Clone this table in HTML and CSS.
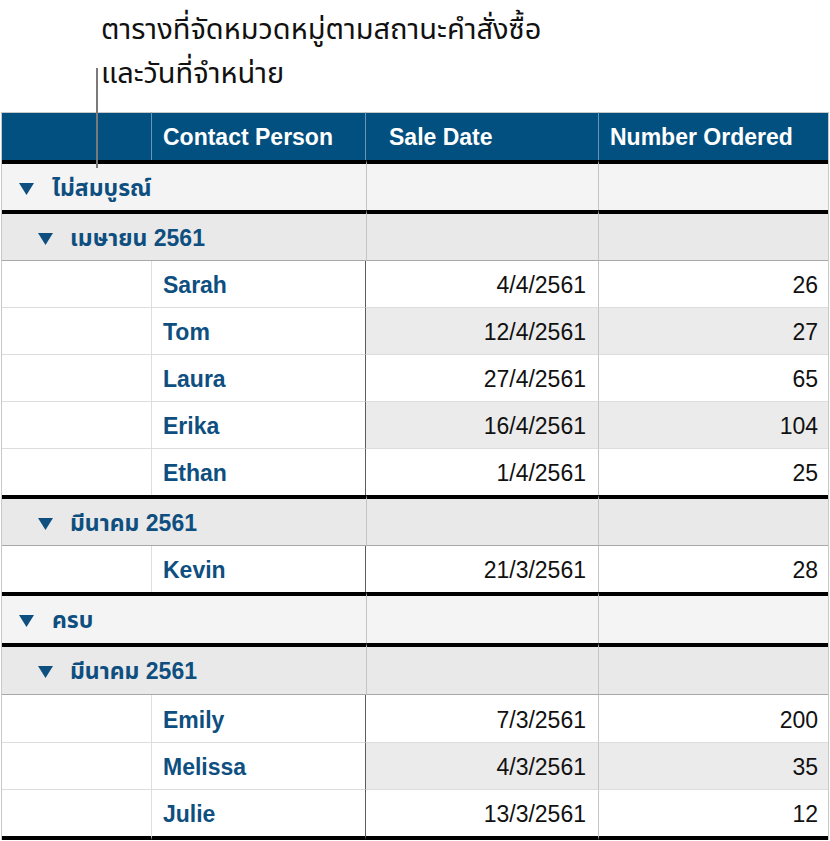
FILE: index.html
```html
<!DOCTYPE html>
<html lang="th">
<head>
<meta charset="utf-8">
<title>Table</title>
<link rel="stylesheet" href="styles.css">
</head>
<body>
<div class="page">
  <div class="caption">
    <p class="caption-text">ตารางที่จัดหมวดหมู่ตามสถานะคำสั่งซื้อ<br>และวันที่จำหน่าย</p>
    <span class="callout-line"></span>
  </div>
  <table class="grid">
    <colgroup>
      <col class="c1"><col class="c2"><col class="c3"><col class="c4">
    </colgroup>
    <thead>
      <tr class="head">
        <th></th>
        <th class="h-name">Contact Person</th>
        <th class="h-date">Sale Date</th>
        <th class="h-num">Number Ordered</th>
      </tr>
    </thead>
    <tbody>
      <tr class="g1">
        <td colspan="2" class="glabel"><span class="tri"><svg width="15" height="12" viewBox="0 0 15 12"><path d="M0 0H15L7.5 12Z"/></svg></span>ไม่สมบูรณ์</td>
        <td class="gsep"></td><td></td>
      </tr>
      <tr class="g2">
        <td colspan="2" class="glabel"><span class="tri"><svg width="15" height="12" viewBox="0 0 15 12"><path d="M0 0H15L7.5 12Z"/></svg></span>เมษายน 2561</td>
        <td class="gsep"></td><td></td>
      </tr>
      <tr class="row"><td></td><td class="name">Sarah</td><td class="date">4/4/2561</td><td class="num">26</td></tr>
      <tr class="row alt"><td></td><td class="name">Tom</td><td class="date">12/4/2561</td><td class="num">27</td></tr>
      <tr class="row"><td></td><td class="name">Laura</td><td class="date">27/4/2561</td><td class="num">65</td></tr>
      <tr class="row alt"><td></td><td class="name">Erika</td><td class="date">16/4/2561</td><td class="num">104</td></tr>
      <tr class="row last"><td></td><td class="name">Ethan</td><td class="date">1/4/2561</td><td class="num">25</td></tr>
      <tr class="g2">
        <td colspan="2" class="glabel"><span class="tri"><svg width="15" height="12" viewBox="0 0 15 12"><path d="M0 0H15L7.5 12Z"/></svg></span>มีนาคม 2561</td>
        <td class="gsep"></td><td></td>
      </tr>
      <tr class="row last"><td></td><td class="name">Kevin</td><td class="date">21/3/2561</td><td class="num">28</td></tr>
      <tr class="g1 tall">
        <td colspan="2" class="glabel"><span class="tri"><svg width="15" height="12" viewBox="0 0 15 12"><path d="M0 0H15L7.5 12Z"/></svg></span>ครบ</td>
        <td class="gsep"></td><td></td>
      </tr>
      <tr class="g2 tall">
        <td colspan="2" class="glabel"><span class="tri"><svg width="15" height="12" viewBox="0 0 15 12"><path d="M0 0H15L7.5 12Z"/></svg></span>มีนาคม 2561</td>
        <td class="gsep"></td><td></td>
      </tr>
      <tr class="row tall"><td></td><td class="name">Emily</td><td class="date">7/3/2561</td><td class="num">200</td></tr>
      <tr class="row alt"><td></td><td class="name">Melissa</td><td class="date">4/3/2561</td><td class="num">35</td></tr>
      <tr class="row last end"><td></td><td class="name">Julie</td><td class="date">13/3/2561</td><td class="num">12</td></tr>
    </tbody>
  </table>
</div>
</body>
</html>
```
FILE: styles.css
```css
html, body {
  margin: 0;
  padding: 0;
  background: #ffffff;
}

.page {
  width: 830px;
  font-family: "Liberation Sans", Arial, "Noto Sans Thai", "Noto Sans Thai UI", Loma, Garuda, Tahoma, sans-serif;
}

.caption {
  position: relative;
  height: 112px;
}

.caption-text {
  margin: 0;
  padding: 8px 0 0 101px;
  font-size: 29px;
  line-height: 44px;
  color: #111111;
  font-family: "Noto Sans Thai", "Noto Sans Thai UI", Loma, Garuda, Tahoma, "Liberation Sans", sans-serif;
}

.callout-line {
  position: absolute;
  left: 96px;
  top: 68px;
  width: 1.5px;
  height: 100px;
  background: #7a7a7a;
  z-index: 2;
}

.grid {
  margin-left: 1px;
  width: 827px;
  table-layout: fixed;
  border-collapse: separate;
  border-spacing: 0;
  font-size: 23px;
  border-left: 1px solid #c9c9c9;
  border-right: 1px solid #c9c9c9;
}

.c1 { width: 150px; }
.c2 { width: 214px; }
.c3 { width: 233px; }
.c4 { width: 229px; }

.grid th, .grid td {
  padding: 0;
  box-sizing: border-box;
  white-space: nowrap;
}

.head th {
  height: 48px;
  background: #02507f;
  color: #ffffff;
  font-weight: bold;
  text-align: left;
  border-right: 1px solid #6f93b3;
  border-top: 1px solid #c9c9c9;
  padding-top: 2px;
}
.head th:last-child { border-right: none; }
.h-name { padding-left: 11px !important; }
.h-date { padding-left: 23px !important; }
.h-num { padding-left: 11px !important; }

.g1 td, .g2 td {
  border-top: 4px solid #000000;
  height: 50px;
  color: #0e4f80;
  font-weight: bold;
  padding-top: 3px;
}
.g1 td { background: #f4f4f4; }
.g2 td { background: #e9e9e9; border-bottom: 1px solid #a8a8a8; height: 51px; }
.g1.tall td { height: 51px; }
.g2.tall td { height: 52px; }

.g1 td.gsep, .g2 td.gsep { border-left: 1px solid #c4c4c4; border-right: 1px solid #c4c4c4; }

.glabel {
  vertical-align: middle;
}
.g1 .glabel { padding-left: 17px !important; }
.g2 .glabel { padding-left: 36px !important; }

.tri {
  display: inline-block;
  width: 15px;
  height: 12px;
  margin-right: 18px;
  vertical-align: 1px;
}
.g2 .tri { margin-right: 17px; }
.tri svg { display: block; fill: #0e4f80; }

.row td {
  height: 47px;
  border-bottom: 1px solid #dddddd;
  background: #ffffff;
  color: #111111;
  padding-top: 3px;
}
.row.last td { height: 46px; border-bottom: none; }
.row.tall td { height: 48px; }
.row.end td { border-bottom: 4px solid #000000; height: 50px; }

.row td:first-child { border-right: 1px solid #dedede; }
.row td.name {
  padding-left: 11px;
  color: #0e4f80;
  font-weight: bold;
  border-right: 1px solid #5c5c5c;
}
.row td.date {
  text-align: right;
  padding-right: 12px;
  border-right: 1px solid #c4c4c4;
}
.row td.num {
  text-align: right;
  padding-right: 10px;
}
.row.alt td.date, .row.alt td.num { background: #ebebeb; }
```
